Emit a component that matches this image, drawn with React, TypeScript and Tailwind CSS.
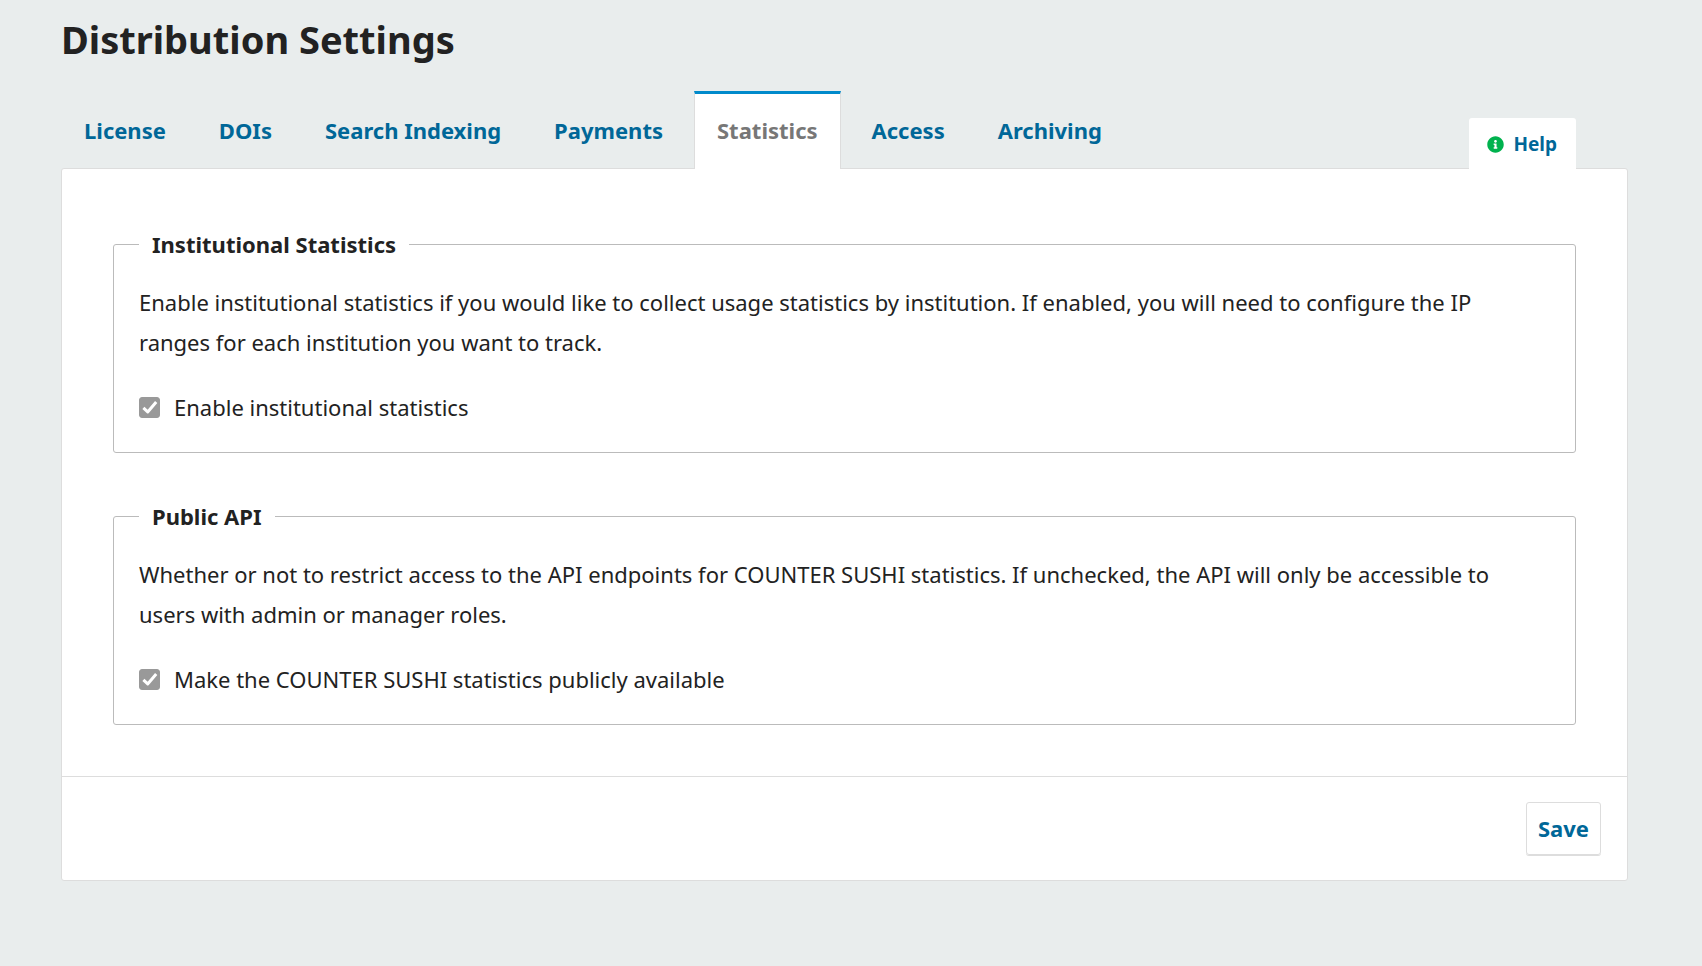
import { useState } from "react";
import { FaInfoCircle } from "react-icons/fa";

const tabs = ["License", "DOIs", "Search Indexing", "Payments", "Statistics", "Access", "Archiving"];

type OptionGroupProps = {
  id: string;
  title: string;
  description: string;
  option: string;
};

function OptionGroup({ id, title, description, option }: OptionGroupProps) {
  const [checked, setChecked] = useState(true);
  return (
    <fieldset className="rounded-[3px] border border-[#bbb] px-[25px] pb-[25px]">
      <legend className="px-[13px] text-[22px] leading-[32px] font-bold">{title}</legend>
      <p className="pt-[22px] pr-[25px] leading-[40px]">{description}</p>
      <div className="mt-[25px] flex items-center gap-[14px]">
        <span className="relative flex">
          <input
            id={id}
            type="checkbox"
            checked={checked}
            onChange={(e) => setChecked(e.target.checked)}
            className="peer size-[21px] appearance-none rounded-[3px] border border-[#999] bg-white checked:bg-[#999]"
          />
          <svg
            viewBox="0 0 21 21"
            className="pointer-events-none absolute inset-0 hidden size-[21px] peer-checked:block"
            fill="none"
            stroke="#fff"
            strokeWidth="3"
            strokeLinejoin="round"
            aria-hidden="true"
          >
            <path d="M4.4 10.8 L8.7 14.9 L17.2 5" />
          </svg>
        </span>
        <label htmlFor={id} className="leading-[40px]">
          {option}
        </label>
      </div>
    </fieldset>
  );
}

export default function App() {
  const [active, setActive] = useState("Statistics");
  return (
    <main className="min-h-screen bg-[#e9eded] pr-[74px] pb-[84px] pl-[61px] font-['Noto_Sans',sans-serif] text-[22px] text-[#222]">
      <h1 className="pt-[13px] text-[38px] leading-[52px] font-bold">Distribution Settings</h1>
      <div className="mt-[26px] flex items-end justify-between pr-[52px]">
        <div role="tablist" className="flex gap-[7px]">
          {tabs.map((tab) => (
            <button
              key={tab}
              type="button"
              role="tab"
              aria-selected={tab === active}
              onClick={() => setActive(tab)}
              className={
                tab === active
                  ? "relative mx-px -mb-px h-[78px] border-x border-t-[3px] border-x-[#ddd] border-t-[#008acb] bg-white px-[22px] pb-[3px] font-bold text-[#777]"
                  : "h-[77px] px-[23px] pt-px font-bold text-[#006798]"
              }
            >
              {tab}
            </button>
          ))}
        </div>
        <button
          type="button"
          className="relative -mb-px flex h-[51px] items-center gap-[9px] rounded-t-[3px] bg-white pt-[2px] pr-[19px] pl-[18px] text-[19px] font-bold text-[#006798]"
        >
          <FaInfoCircle className="size-[17px] text-[#00b24e]" aria-hidden="true" />
          Help
        </button>
      </div>
      <section className="rounded-[3px] border border-[#ddd] bg-white">
        <div className="flex flex-col gap-[47px] px-[51px] pt-[59px] pb-[51px]">
          <OptionGroup
            id="institutional"
            title="Institutional Statistics"
            description="Enable institutional statistics if you would like to collect usage statistics by institution. If enabled, you will need to configure the IP ranges for each institution you want to track."
            option="Enable institutional statistics"
          />
          <OptionGroup
            id="public-api"
            title="Public API"
            description="Whether or not to restrict access to the API endpoints for COUNTER SUSHI statistics. If unchecked, the API will only be accessible to users with admin or manager roles."
            option="Make the COUNTER SUSHI statistics publicly available"
          />
        </div>
        <div className="flex justify-end border-t border-[#ddd] px-[26px] py-[25px]">
          <button
            type="button"
            className="h-[53px] rounded-[3px] border border-[#ddd] px-[11px] font-bold text-[#006798] shadow-[0_1px_0_#ddd]"
          >
            Save
          </button>
        </div>
      </section>
    </main>
  );
}
